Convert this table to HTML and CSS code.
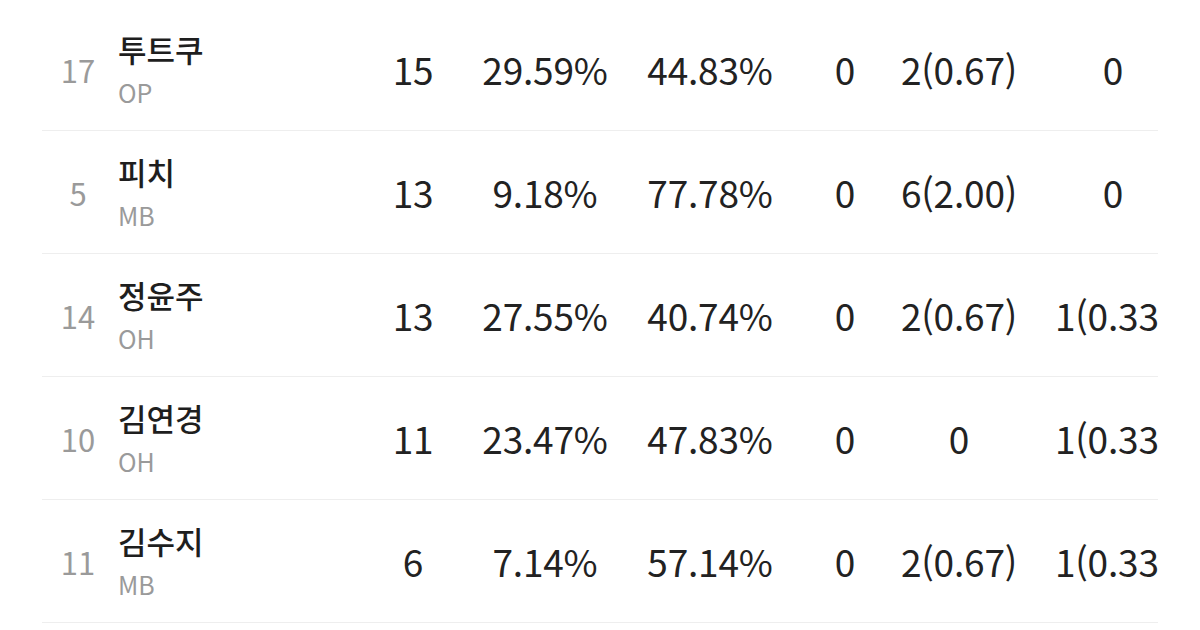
FILE: index.html
```html
<!DOCTYPE html>
<html lang="ko">
<head>
<meta charset="utf-8">
<link rel="stylesheet" href="styles.css">
</head>
<body>
<div class="page">
  <div class="table">
    <div class="row">
      <div class="rank">17</div>
      <div class="player"><div class="name">투트쿠</div><div class="pos">OP</div></div>
      <div class="cell">15</div><div class="cell">29.59%</div><div class="cell">44.83%</div><div class="cell">0</div><div class="cell">2(0.67)</div><div class="cell">0</div>
    </div>
    <div class="row">
      <div class="rank">5</div>
      <div class="player"><div class="name">피치</div><div class="pos">MB</div></div>
      <div class="cell">13</div><div class="cell">9.18%</div><div class="cell">77.78%</div><div class="cell">0</div><div class="cell">6(2.00)</div><div class="cell">0</div>
    </div>
    <div class="row">
      <div class="rank">14</div>
      <div class="player"><div class="name">정윤주</div><div class="pos">OH</div></div>
      <div class="cell">13</div><div class="cell">27.55%</div><div class="cell">40.74%</div><div class="cell">0</div><div class="cell">2(0.67)</div><div class="cell">1(0.33)</div>
    </div>
    <div class="row">
      <div class="rank">10</div>
      <div class="player"><div class="name">김연경</div><div class="pos">OH</div></div>
      <div class="cell">11</div><div class="cell">23.47%</div><div class="cell">47.83%</div><div class="cell">0</div><div class="cell">0</div><div class="cell">1(0.33)</div>
    </div>
    <div class="row">
      <div class="rank">11</div>
      <div class="player"><div class="name">김수지</div><div class="pos">MB</div></div>
      <div class="cell">6</div><div class="cell">7.14%</div><div class="cell">57.14%</div><div class="cell">0</div><div class="cell">2(0.67)</div><div class="cell">1(0.33)</div>
    </div>
  </div>
</div>
</body>
</html>
```

FILE: styles.css
```css
html, body {
  margin: 0;
  padding: 0;
  background: #ffffff;
}
body {
  font-family: "Noto Sans CJK KR", "Noto Sans", sans-serif;
  color: #222222;
}
.page {
  padding: 8px 0 0 42px;
  width: 1116px;
  overflow: hidden;
}
.table {
  width: 1150px;
}
.row {
  display: grid;
  grid-template-columns: 72px 236px 126px 138px 192px 78px 150px 158px;
  align-items: center;
  height: 122px;
  border-bottom: 1px solid #eeeeee;
}
.rank {
  text-align: center;
  font-size: 31px;
  color: #9a9a9a;
}
.player {
  padding-left: 4px;
  display: flex;
  flex-direction: column;
}
.name {
  font-size: 31px;
  line-height: 38px;
  font-weight: 500;
  color: #1e1e1e;
}
.pos {
  font-size: 25px;
  line-height: 32px;
  color: #9a9a9a;
  margin-top: 8px;
}
.cell {
  text-align: center;
  font-size: 37px;
  letter-spacing: -0.2px;
  white-space: nowrap;
  color: #222222;
}
```
